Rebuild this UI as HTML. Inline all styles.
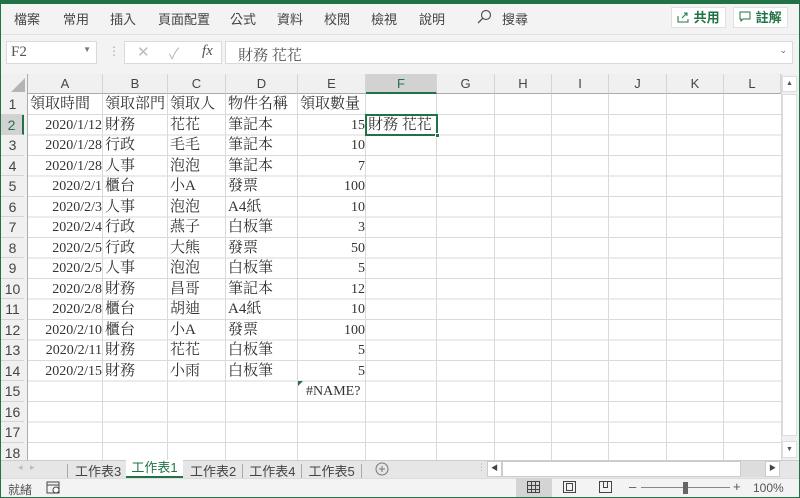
<!DOCTYPE html>
<html><head><meta charset="utf-8"><style>
*{box-sizing:border-box;margin:0;padding:0}
body{width:800px;height:498px;overflow:hidden;background:#f3f3f3;position:relative;font-family:"Liberation Sans","Noto Sans CJK TC",sans-serif;font-size:13px;color:#444}
.a{position:absolute}
.frame{left:0;top:0;width:800px;height:498px;border:1px solid #217346;border-top:4px solid #217346;pointer-events:none;z-index:9}
.tab{top:9px;font-size:13px;color:#444}
.btn{top:7px;height:21px;background:#fff;border:1px solid #e1e1e1;color:#217346;font-weight:bold;font-size:13px;padding:1px 5px;white-space:nowrap;line-height:17px}
.box{background:#fff;border:1px solid #dadada}
.cell{font-family:"Liberation Serif","Noto Serif CJK TC",serif;font-size:14px;color:#333;white-space:nowrap;line-height:21px}
.ch{top:74px;height:20px;border-right:1px solid #d4d4d4;border-bottom:1px solid #ababab;text-align:center;line-height:20px;font-size:13px;color:#444;background:#f0f0f0}
.rh{left:5px;width:23px;text-align:center;font-size:14px;color:#444;line-height:20px;border-bottom:1px solid #d4d4d4;background:#f0f0f0}
</style></head><body>
<div class="a frame"></div>
<div class="a tab" style="left:14px">檔案</div>
<div class="a tab" style="left:63px">常用</div>
<div class="a tab" style="left:110px">插入</div>
<div class="a tab" style="left:158px">頁面配置</div>
<div class="a tab" style="left:230px">公式</div>
<div class="a tab" style="left:277px">資料</div>
<div class="a tab" style="left:324px">校閱</div>
<div class="a tab" style="left:371px">檢視</div>
<div class="a tab" style="left:419px">說明</div>
<svg class="a" style="left:476px;top:9px" width="16" height="16"><circle cx="10" cy="6" r="4.5" fill="none" stroke="#555" stroke-width="1.2"/><line x1="7" y1="9" x2="2" y2="14" stroke="#555" stroke-width="1.3"/></svg>
<div class="a tab" style="left:502px">搜尋</div>
<div class="a btn" style="left:671px"><svg width="13" height="12" style="vertical-align:-1px"><path d="M1 5V11H11V8M5 7L10 2M7 2H10V5" fill="none" stroke="#217346"/></svg> 共用</div>
<div class="a btn" style="left:733px"><svg width="13" height="12" style="vertical-align:-1px"><path d="M1 1H11V8H4L2 10V8H1Z" fill="none" stroke="#217346"/></svg> 註解</div>
<div class="a" style="left:1px;top:34px;width:798px;height:38px;background:#f3f3f3;border-top:1px solid #e0e0e0"></div>
<div class="a box" style="left:6px;top:41px;width:91px;height:23px;font-family:'Liberation Serif',serif;font-size:15px;padding:2px 4px;color:#555">F2<span style="position:absolute;right:5px;top:3px;font-size:8px;color:#777">▼</span></div>
<div class="a" style="left:108px;top:44px;color:#aaa;font-size:12px">⋮</div>
<div class="a box" style="left:124px;top:41px;width:98px;height:23px;color:#bbb;font-size:15px"><span style="position:absolute;left:12px;top:1px">✕</span><span style="position:absolute;left:44px;top:1px">✓</span><i style="position:absolute;left:77px;top:1px;font-family:'Liberation Serif',serif;color:#555">fx</i></div>
<div class="a box" style="left:225px;top:41px;width:568px;height:23px;padding:2px 12px;font-family:'Liberation Serif','Noto Serif CJK TC',serif;font-size:15px;color:#555">財務 花花<span style="position:absolute;right:5px;top:3px;font-size:9px;color:#666;font-family:'Liberation Sans'">⌄</span></div>
<div class="a" style="left:1px;top:74px;width:781px;height:386px;background:#fff"></div>
<div class="a" style="left:1px;top:74px;width:27px;height:386px;background:#f0f0f0;border-right:1px solid #ababab"></div>
<svg class="a" style="left:10px;top:77px" width="16" height="16"><polygon points="15,1 15,15 1,15" fill="#b4b4b4"/></svg>
<div class="a ch" style="left:28px;width:75px">A</div>
<div class="a ch" style="left:103px;width:65px">B</div>
<div class="a ch" style="left:168px;width:58px">C</div>
<div class="a ch" style="left:226px;width:72px">D</div>
<div class="a ch" style="left:298px;width:68px">E</div>
<div class="a ch" style="left:366px;width:71px;background:#d2d2d2;color:#217346;border-bottom:2px solid #217346">F</div>
<div class="a ch" style="left:437px;width:58px">G</div>
<div class="a ch" style="left:495px;width:57px">H</div>
<div class="a ch" style="left:552px;width:57px">I</div>
<div class="a ch" style="left:609px;width:58px">J</div>
<div class="a ch" style="left:667px;width:57px">K</div>
<div class="a ch" style="left:724px;width:57px">L</div>
<svg class="a" style="left:0;top:94px" width="782" height="366">
<g stroke="#dadada" stroke-width="1">
<line x1="102.5" y1="0" x2="102.5" y2="366"/><line x1="167.5" y1="0" x2="167.5" y2="366"/><line x1="225.5" y1="0" x2="225.5" y2="366"/><line x1="297.5" y1="0" x2="297.5" y2="366"/><line x1="365.5" y1="0" x2="365.5" y2="366"/><line x1="436.5" y1="0" x2="436.5" y2="366"/><line x1="494.5" y1="0" x2="494.5" y2="366"/><line x1="551.5" y1="0" x2="551.5" y2="366"/><line x1="608.5" y1="0" x2="608.5" y2="366"/><line x1="666.5" y1="0" x2="666.5" y2="366"/><line x1="723.5" y1="0" x2="723.5" y2="366"/>
</g>
<g stroke="#dadada">
<line x1="28" y1="20.5" x2="782" y2="20.5"/><line x1="28" y1="41" x2="782" y2="41"/><line x1="28" y1="61.5" x2="782" y2="61.5"/><line x1="28" y1="82" x2="782" y2="82"/><line x1="28" y1="102.5" x2="782" y2="102.5"/><line x1="28" y1="123" x2="782" y2="123"/><line x1="28" y1="143.5" x2="782" y2="143.5"/><line x1="28" y1="164" x2="782" y2="164"/><line x1="28" y1="184.5" x2="782" y2="184.5"/><line x1="28" y1="205" x2="782" y2="205"/><line x1="28" y1="225.5" x2="782" y2="225.5"/><line x1="28" y1="246" x2="782" y2="246"/><line x1="28" y1="266.5" x2="782" y2="266.5"/><line x1="28" y1="287" x2="782" y2="287"/><line x1="28" y1="307.5" x2="782" y2="307.5"/><line x1="28" y1="328" x2="782" y2="328"/><line x1="28" y1="348.5" x2="782" y2="348.5"/>
</g>
</svg>
<div class="a" style="left:1px;top:94px;width:27px">
<div class="rh" style="height:20.5px">1</div><div class="rh" style="height:20.5px;background:#d2d2d2;color:#217346;border-right:2px solid #217346">2</div><div class="rh" style="height:20.5px">3</div><div class="rh" style="height:20.5px">4</div><div class="rh" style="height:20.5px">5</div><div class="rh" style="height:20.5px">6</div><div class="rh" style="height:20.5px">7</div><div class="rh" style="height:20.5px">8</div><div class="rh" style="height:20.5px">9</div><div class="rh" style="height:20.5px">10</div><div class="rh" style="height:20.5px">11</div><div class="rh" style="height:20.5px">12</div><div class="rh" style="height:20.5px">13</div><div class="rh" style="height:20.5px">14</div><div class="rh" style="height:20.5px">15</div><div class="rh" style="height:20.5px">16</div><div class="rh" style="height:20.5px">17</div><div class="rh" style="height:20.5px">18</div>
</div>
<div class="a cell" style="left:30px;top:94px;font-size:15px">領取時間</div><div class="a cell" style="left:105px;top:94px;font-size:15px">領取部門</div><div class="a cell" style="left:170px;top:94px;font-size:15px">領取人</div><div class="a cell" style="left:228px;top:94px;font-size:15px">物件名稱</div><div class="a cell" style="left:300px;top:94px;font-size:15px">領取數量</div>
<div class="a" style="left:28px;top:114.5px;width:74px">
<div class="cell" style="text-align:right;height:20.5px">2020/1/12</div><div class="cell" style="text-align:right;height:20.5px">2020/1/28</div><div class="cell" style="text-align:right;height:20.5px">2020/1/28</div><div class="cell" style="text-align:right;height:20.5px">2020/2/1</div><div class="cell" style="text-align:right;height:20.5px">2020/2/3</div><div class="cell" style="text-align:right;height:20.5px">2020/2/4</div><div class="cell" style="text-align:right;height:20.5px">2020/2/5</div><div class="cell" style="text-align:right;height:20.5px">2020/2/5</div><div class="cell" style="text-align:right;height:20.5px">2020/2/8</div><div class="cell" style="text-align:right;height:20.5px">2020/2/8</div><div class="cell" style="text-align:right;height:20.5px">2020/2/10</div><div class="cell" style="text-align:right;height:20.5px">2020/2/11</div><div class="cell" style="text-align:right;height:20.5px">2020/2/15</div>
</div>
<div class="a" style="left:105px;top:114.5px">
<div class="cell" style="height:20.5px;font-size:15px">財務</div><div class="cell" style="height:20.5px;font-size:15px">行政</div><div class="cell" style="height:20.5px;font-size:15px">人事</div><div class="cell" style="height:20.5px;font-size:15px">櫃台</div><div class="cell" style="height:20.5px;font-size:15px">人事</div><div class="cell" style="height:20.5px;font-size:15px">行政</div><div class="cell" style="height:20.5px;font-size:15px">行政</div><div class="cell" style="height:20.5px;font-size:15px">人事</div><div class="cell" style="height:20.5px;font-size:15px">財務</div><div class="cell" style="height:20.5px;font-size:15px">櫃台</div><div class="cell" style="height:20.5px;font-size:15px">櫃台</div><div class="cell" style="height:20.5px;font-size:15px">財務</div><div class="cell" style="height:20.5px;font-size:15px">財務</div>
</div>
<div class="a" style="left:170px;top:114.5px">
<div class="cell" style="height:20.5px;font-size:15px">花花</div><div class="cell" style="height:20.5px;font-size:15px">毛毛</div><div class="cell" style="height:20.5px;font-size:15px">泡泡</div><div class="cell" style="height:20.5px;font-size:15px">小A</div><div class="cell" style="height:20.5px;font-size:15px">泡泡</div><div class="cell" style="height:20.5px;font-size:15px">燕子</div><div class="cell" style="height:20.5px;font-size:15px">大熊</div><div class="cell" style="height:20.5px;font-size:15px">泡泡</div><div class="cell" style="height:20.5px;font-size:15px">昌哥</div><div class="cell" style="height:20.5px;font-size:15px">胡迪</div><div class="cell" style="height:20.5px;font-size:15px">小A</div><div class="cell" style="height:20.5px;font-size:15px">花花</div><div class="cell" style="height:20.5px;font-size:15px">小雨</div>
</div>
<div class="a" style="left:228px;top:114.5px">
<div class="cell" style="height:20.5px;font-size:15px">筆記本</div><div class="cell" style="height:20.5px;font-size:15px">筆記本</div><div class="cell" style="height:20.5px;font-size:15px">筆記本</div><div class="cell" style="height:20.5px;font-size:15px">發票</div><div class="cell" style="height:20.5px;font-size:15px">A4紙</div><div class="cell" style="height:20.5px;font-size:15px">白板筆</div><div class="cell" style="height:20.5px;font-size:15px">發票</div><div class="cell" style="height:20.5px;font-size:15px">白板筆</div><div class="cell" style="height:20.5px;font-size:15px">筆記本</div><div class="cell" style="height:20.5px;font-size:15px">A4紙</div><div class="cell" style="height:20.5px;font-size:15px">發票</div><div class="cell" style="height:20.5px;font-size:15px">白板筆</div><div class="cell" style="height:20.5px;font-size:15px">白板筆</div>
</div>
<div class="a" style="left:298px;top:114.5px;width:67px">
<div class="cell" style="text-align:right;height:20.5px">15</div><div class="cell" style="text-align:right;height:20.5px">10</div><div class="cell" style="text-align:right;height:20.5px">7</div><div class="cell" style="text-align:right;height:20.5px">100</div><div class="cell" style="text-align:right;height:20.5px">10</div><div class="cell" style="text-align:right;height:20.5px">3</div><div class="cell" style="text-align:right;height:20.5px">50</div><div class="cell" style="text-align:right;height:20.5px">5</div><div class="cell" style="text-align:right;height:20.5px">12</div><div class="cell" style="text-align:right;height:20.5px">10</div><div class="cell" style="text-align:right;height:20.5px">100</div><div class="cell" style="text-align:right;height:20.5px">5</div><div class="cell" style="text-align:right;height:20.5px">5</div>
</div>
<div class="a cell" style="left:306px;top:381px">#NAME?</div>
<svg class="a" style="left:298px;top:381px" width="6" height="6"><polygon points="0,0 5,0 0,5" fill="#217346"/></svg>
<div class="a" style="left:365px;top:114px;width:73px;height:22px;border:2px solid #217346"></div>
<div class="a" style="left:435px;top:133px;width:5px;height:5px;background:#217346;border:1px solid #fff"></div>
<div class="a cell" style="left:368px;top:114.5px;font-size:15px">財務 花花</div>
<div class="a" style="left:781px;top:74px;width:18px;height:386px;background:#f0f0f0;border-left:1px solid #dadada"></div>
<div class="a" style="left:782px;top:76px;width:15px;height:16px;background:#fff;border:1px solid #ddd;font-size:7px;text-align:center;line-height:14px;color:#555">▲</div>
<div class="a" style="left:782px;top:94px;width:15px;height:342px;background:#fff;border:1px solid #ddd"></div>
<div class="a" style="left:782px;top:441px;width:15px;height:17px;background:#fff;border:1px solid #ddd;font-size:7px;text-align:center;line-height:15px;color:#555">▼</div>
<div class="a" style="left:1px;top:460px;width:798px;height:18px;background:#e6e6e6;border-top:1px solid #ccc"></div>
<div class="a" style="left:18px;top:462px;font-size:9px;color:#bbb">◂ &nbsp; ▸</div>
<div class="a" style="left:67px;top:461px;font-size:13px;color:#444;white-space:nowrap">
<span style="border-left:1px solid #aaa;padding:0 7px">工作表3</span></div>
<div class="a" style="left:126px;top:460px;width:57px;height:18px;background:#fff;border-bottom:2px solid #217346;color:#217346;text-align:center;font-size:13px;line-height:16px">工作表1</div>
<div class="a" style="left:184px;top:461px;font-size:13px;color:#444;white-space:nowrap"><span style="padding:0 6px">工作表2</span><span style="border-left:1px solid #aaa;padding:0 6px">工作表4</span><span style="border-left:1px solid #aaa;border-right:1px solid #aaa;padding:0 6px">工作表5</span></div>
<svg class="a" style="left:375px;top:462px" width="14" height="14"><circle cx="7" cy="7" r="6" fill="none" stroke="#777"/><path d="M7 4V10M4 7H10" stroke="#777"/></svg>
<div class="a" style="left:477px;top:462px;color:#aaa;font-size:9px">⋮</div>
<div class="a" style="left:487px;top:461px;width:15px;height:16px;background:#fff;border:1px solid #ccc;font-size:7px;text-align:center;line-height:14px;color:#444">◀</div>
<div class="a" style="left:502px;top:461px;width:239px;height:16px;background:#fff;border:1px solid #ccc"></div>
<div class="a" style="left:741px;top:461px;width:24px;height:16px;background:#ddd"></div>
<div class="a" style="left:765px;top:461px;width:15px;height:16px;background:#fff;border:1px solid #ccc;font-size:7px;text-align:center;line-height:14px;color:#444">▶</div>
<div class="a" style="left:1px;top:478px;width:798px;height:20px;background:#f3f3f3;border-top:1px solid #ddd"></div>
<div class="a" style="left:8px;top:481px;font-size:12px;color:#555">就緒</div>
<svg class="a" style="left:46px;top:481px" width="15" height="14"><rect x="1" y="1" width="12" height="11" fill="none" stroke="#444"/><line x1="1" y1="4" x2="13" y2="4" stroke="#444"/><circle cx="10" cy="9" r="3" fill="#fff" stroke="#444"/></svg>
<div class="a" style="left:516px;top:478px;width:36px;height:20px;background:#d4d4d4"></div>
<svg class="a" style="left:527px;top:481px" width="14" height="13"><g fill="none" stroke="#444"><rect x="0.5" y="0.5" width="12" height="11"/><path d="M4.5 0.5V11.5M8.5 0.5V11.5M0.5 4.5H12.5M0.5 8.5H12.5"/></g></svg>
<svg class="a" style="left:563px;top:481px" width="14" height="13"><g fill="none" stroke="#444"><rect x="0.5" y="0.5" width="12" height="11"/><rect x="3.5" y="2.5" width="6" height="7"/></g></svg>
<svg class="a" style="left:599px;top:481px" width="14" height="13"><g fill="none" stroke="#444"><path d="M0.5 0.5H12.5V11.5H0.5Z M4.5 0.5V6.5H8.5V0.5"/></g></svg>
<div class="a" style="left:629px;top:479px;color:#555;font-size:13px">–</div>
<div class="a" style="left:641px;top:487px;width:89px;height:1px;background:#888"></div>
<div class="a" style="left:683px;top:482px;width:5px;height:12px;background:#666"></div>
<div class="a" style="left:733px;top:479px;color:#555;font-size:13px">+</div>
<div class="a" style="left:753px;top:481px;color:#555;font-size:12px">100%</div>
</body></html>
